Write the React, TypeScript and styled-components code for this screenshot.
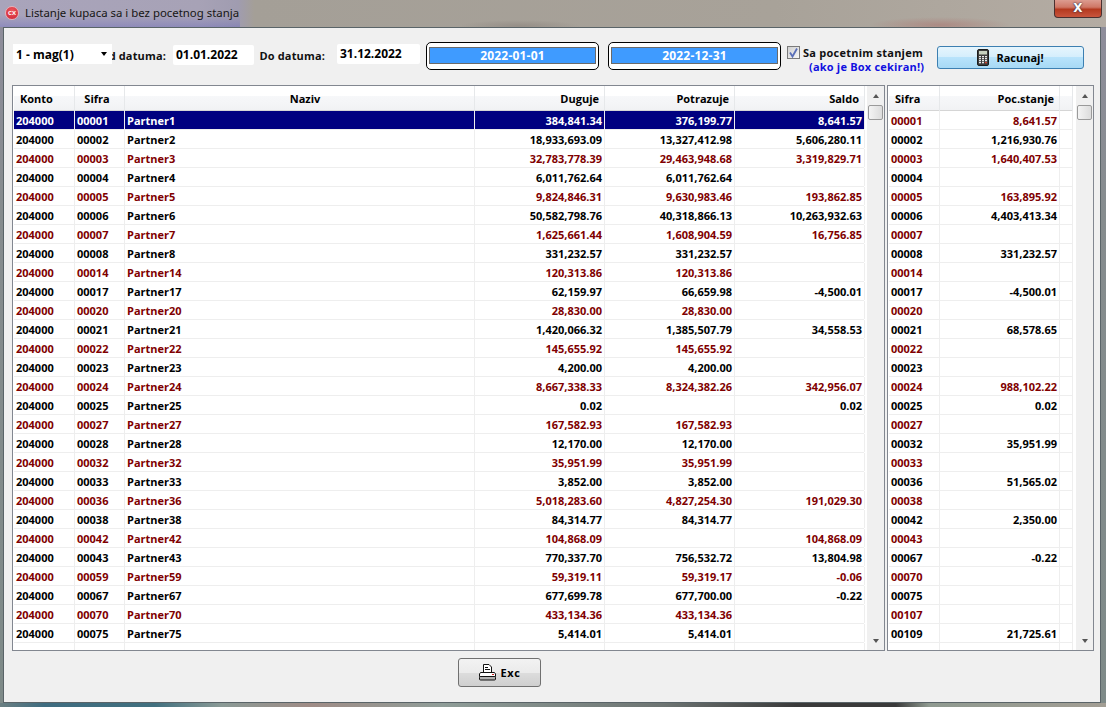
import React from "react";
import styled, { createGlobalStyle } from "styled-components";

const GlobalStyle = createGlobalStyle`
  html, body {
    margin: 0;
    padding: 0;
    width: 1106px;
    height: 707px;
    overflow: hidden;
    background: #8c9a96;
    font-family: "Open Sans", sans-serif;
  }
`;

type LeftRow = [string, string, string, string, string, string];

const leftRows: LeftRow[] = [
  ["204000", "00001", "Partner1", "384,841.34", "376,199.77", "8,641.57"],
  ["204000", "00002", "Partner2", "18,933,693.09", "13,327,412.98", "5,606,280.11"],
  ["204000", "00003", "Partner3", "32,783,778.39", "29,463,948.68", "3,319,829.71"],
  ["204000", "00004", "Partner4", "6,011,762.64", "6,011,762.64", ""],
  ["204000", "00005", "Partner5", "9,824,846.31", "9,630,983.46", "193,862.85"],
  ["204000", "00006", "Partner6", "50,582,798.76", "40,318,866.13", "10,263,932.63"],
  ["204000", "00007", "Partner7", "1,625,661.44", "1,608,904.59", "16,756.85"],
  ["204000", "00008", "Partner8", "331,232.57", "331,232.57", ""],
  ["204000", "00014", "Partner14", "120,313.86", "120,313.86", ""],
  ["204000", "00017", "Partner17", "62,159.97", "66,659.98", "-4,500.01"],
  ["204000", "00020", "Partner20", "28,830.00", "28,830.00", ""],
  ["204000", "00021", "Partner21", "1,420,066.32", "1,385,507.79", "34,558.53"],
  ["204000", "00022", "Partner22", "145,655.92", "145,655.92", ""],
  ["204000", "00023", "Partner23", "4,200.00", "4,200.00", ""],
  ["204000", "00024", "Partner24", "8,667,338.33", "8,324,382.26", "342,956.07"],
  ["204000", "00025", "Partner25", "0.02", "", "0.02"],
  ["204000", "00027", "Partner27", "167,582.93", "167,582.93", ""],
  ["204000", "00028", "Partner28", "12,170.00", "12,170.00", ""],
  ["204000", "00032", "Partner32", "35,951.99", "35,951.99", ""],
  ["204000", "00033", "Partner33", "3,852.00", "3,852.00", ""],
  ["204000", "00036", "Partner36", "5,018,283.60", "4,827,254.30", "191,029.30"],
  ["204000", "00038", "Partner38", "84,314.77", "84,314.77", ""],
  ["204000", "00042", "Partner42", "104,868.09", "", "104,868.09"],
  ["204000", "00043", "Partner43", "770,337.70", "756,532.72", "13,804.98"],
  ["204000", "00059", "Partner59", "59,319.11", "59,319.17", "-0.06"],
  ["204000", "00067", "Partner67", "677,699.78", "677,700.00", "-0.22"],
  ["204000", "00070", "Partner70", "433,134.36", "433,134.36", ""],
  ["204000", "00075", "Partner75", "5,414.01", "5,414.01", ""],
];

const rightRows: [string, string][] = [
  ["00001", "8,641.57"],
  ["00002", "1,216,930.76"],
  ["00003", "1,640,407.53"],
  ["00004", ""],
  ["00005", "163,895.92"],
  ["00006", "4,403,413.34"],
  ["00007", ""],
  ["00008", "331,232.57"],
  ["00014", ""],
  ["00017", "-4,500.01"],
  ["00020", ""],
  ["00021", "68,578.65"],
  ["00022", ""],
  ["00023", ""],
  ["00024", "988,102.22"],
  ["00025", "0.02"],
  ["00027", ""],
  ["00032", "35,951.99"],
  ["00033", ""],
  ["00036", "51,565.02"],
  ["00038", ""],
  ["00042", "2,350.00"],
  ["00043", ""],
  ["00067", "-0.22"],
  ["00070", ""],
  ["00075", ""],
  ["00107", ""],
  ["00109", "21,725.61"],
];

const leftCols = "61px 50px 350px 130px 130px 130px";
const rightCols = "51px 120px 13px";

const App = () => (
  <>
    <GlobalStyle />
    <Desktop>
      <TitleBar>
        <AppIcon>CX</AppIcon>
        <TitleText>Listanje kupaca sa i bez pocetnog stanja</TitleText>
        <CloseButton>X</CloseButton>
      </TitleBar>
      <Client>
        <Toolbar>
          <Combo>
            <span>1 - mag(1)</span>
            <ComboArrow />
          </Combo>
          <DateLabel $width={67} $overlap>
            Od datuma:
          </DateLabel>
          <TextField $width={81} $left={7} $top={1}>
            01.01.2022
          </TextField>
          <DateLabel $width={66} $left={5}>
            Do datuma:
          </DateLabel>
          <TextField $width={83} $left={12}>
            31.12.2022
          </TextField>
          <DateBox $left={6}>
            <DateFill>2022-01-01</DateFill>
          </DateBox>
          <DateBox $left={9}>
            <DateFill>2022-12-31</DateFill>
          </DateBox>
          <CheckArea>
            <CheckLine>
              <CheckBox>
                <svg width="11" height="11" viewBox="0 0 11 11">
                  <path d="M2 5.5 L4.5 9.5 L9 1.5" fill="none" stroke="#5a6fb8" strokeWidth="1.8" />
                </svg>
              </CheckBox>
              <CheckText>Sa pocetnim stanjem</CheckText>
            </CheckLine>
            <CheckHint>(ako je Box cekiran!)</CheckHint>
          </CheckArea>
          <CalcButton>
            <svg width="12" height="17" viewBox="0 0 12 17">
              <rect x="0.5" y="0.5" width="11" height="16" rx="1.5" fill="#3c3c3c" stroke="#1c1c1c" />
              <rect x="2" y="2" width="8" height="3.5" fill="#c8d2c0" />
              {[7, 9, 11, 13].map((y) =>
                [2, 5, 8].map((x) => (
                  <rect key={`${x}-${y}`} x={x} y={y} width="2" height="1.3" fill={y === 13 && x === 8 ? "#d04030" : "#e8e8e8"} />
                ))
              )}
            </svg>
            Racunaj!
          </CalcButton>
        </Toolbar>
        <Grids>
          <Grid $width={873}>
            <GridBody>
              <HeaderRow $cols={leftCols}>
                <HeadCell $align="left" $pad="0 0 0 6px">Konto</HeadCell>
                <HeadCell $align="center">Sifra</HeadCell>
                <HeadCell $align="center" $pad="0 0 0 11px">Naziv</HeadCell>
                <HeadCell $align="right">Duguje</HeadCell>
                <HeadCell $align="right">Potrazuje</HeadCell>
                <HeadCell $align="right">Saldo</HeadCell>
              </HeaderRow>
              {leftRows.map((r, i) => (
                <DataRow key={r[1]} $cols={leftCols} $selected={i === 0} $red={i % 2 === 0}>
                  <Cell>{r[0]}</Cell>
                  <Cell>{r[1]}</Cell>
                  <Cell>{r[2]}</Cell>
                  <NumCell>{r[3]}</NumCell>
                  <NumCell>{r[4]}</NumCell>
                  <NumCell>{r[5]}</NumCell>
                </DataRow>
              ))}
              <DataRow $cols={leftCols} $stub>
                <Cell />
                <Cell />
                <Cell />
                <Cell />
                <Cell />
                <Cell />
              </DataRow>
            </GridBody>
            <ScrollBar />
          </Grid>
          <Grid $width={207}>
            <GridBody>
              <HeaderRow $cols={rightCols}>
                <HeadCell $align="left" $pad="0 0 0 6px">Sifra</HeadCell>
                <HeadCell $align="right">Poc.stanje</HeadCell>
                <HeadCell $align="right" />
              </HeaderRow>
              {rightRows.map((r, i) => (
                <DataRow key={r[0]} $cols={rightCols} $red={i % 2 === 0}>
                  <Cell>{r[0]}</Cell>
                  <NumCell>{r[1]}</NumCell>
                  <Cell />
                </DataRow>
              ))}
              <DataRow $cols={rightCols} $stub>
                <Cell />
                <Cell />
                <Cell />
              </DataRow>
            </GridBody>
            <ScrollBar />
          </Grid>
        </Grids>
        <Footer>
          <ExcButton>
            <svg width="17" height="17" viewBox="0 0 17 17">
              <path d="M4.5 0.5 H10 L12.5 3 V8.5 H4.5 Z" fill="#fff" stroke="#111" />
              <path d="M6 3.5 H9 M6 5.5 H11" stroke="#111" />
              <path d="M1.5 8.5 H15.5 L16.5 10 V12.5 H0.5 V10 Z" fill="#fff" stroke="#111" />
              <rect x="13" y="10" width="2" height="1" fill="#d02020" />
              <rect x="0.5" y="12.5" width="16" height="3.5" rx="1" fill="#b0b0b0" stroke="#111" />
            </svg>
            <ExcLabel>Exc</ExcLabel>
          </ExcButton>
        </Footer>
      </Client>
      <BottomStrip />
    </Desktop>
  </>
);

const ScrollBar = () => (
  <Scroll>
    <ScrollArrow $up />
    <Thumb />
    <ScrollSpace />
    <ScrollArrow />
  </Scroll>
);

export default App;

const Desktop = styled.div`
  width: 1106px;
  height: 707px;
  display: flex;
  flex-direction: column;
  background: linear-gradient(180deg, #8f8d9c 0%, #868c8e 30%, #7e8a88 100%);
  overflow: hidden;
`;

const TitleBar = styled.div`
  height: 27px;
  flex: none;
  display: flex;
  align-items: flex-start;
  padding-left: 5px;
  background:
    radial-gradient(ellipse 70px 8px at 940px 25px, rgba(170, 110, 105, 0.5), transparent),
    radial-gradient(ellipse 60px 6px at 520px 26px, rgba(120, 110, 105, 0.35), transparent),
    linear-gradient(180deg, transparent 55%, rgba(95, 95, 190, 0.35) 100%) 0 0 / 240px 100% no-repeat,
    linear-gradient(90deg, #a9a4bb 0%, #a7a2b6 18%, #a09cb0 21.5%, #a49f97 23%, #a8a299 70%, #b4aca3 100%);
`;

const AppIcon = styled.div`
  width: 14px;
  height: 14px;
  margin-top: 6px;
  border-radius: 50%;
  border: 1px solid #e8b0b8;
  box-sizing: border-box;
  background: radial-gradient(circle at 50% 35%, #ee5a60, #cc2030);
  color: #fff;
  font-size: 6px;
  font-weight: 700;
  line-height: 12px;
  text-align: center;
  flex: none;
`;

const TitleText = styled.div`
  margin: 5px 0 0 6px;
  font-family: "Noto Sans", sans-serif;
  font-size: 11.4px;
  line-height: 16px;
  white-space: nowrap;
  color: #151515;
`;

const CloseButton = styled.div`
  margin-left: auto;
  margin-right: 4px;
  width: 48px;
  height: 18px;
  box-sizing: border-box;
  border: 1px solid #4a3030;
  border-top: none;
  border-radius: 0 0 4px 4px;
  background: linear-gradient(180deg, #dc9c90 0%, #cf7766 42%, #b4391f 55%, #c9553d 100%);
  color: #fff;
  font-family: "DejaVu Sans", sans-serif;
  font-size: 12px;
  font-weight: 700;
  line-height: 16px;
  text-align: center;
  text-shadow: 0 0 1px #303048, 0 0 2px #303048;
`;

const Client = styled.div`
  flex: none;
  width: 1098px;
  height: 676px;
  margin-left: 3px;
  box-sizing: border-box;
  border: 1px solid #5a6468;
  background: #f0f0f0;
  display: flex;
  flex-direction: column;
`;

const BottomStrip = styled.div`
  flex: 1;
  background: linear-gradient(
    90deg,
    #6a7f82 0%,
    #3e6c80 4%,
    #41707f 14%,
    #8a9a96 20%,
    #a08c86 28%,
    #8f9d98 40%,
    #6d7472 60%,
    #3a3a3a 72%,
    #3a3a3a 81%,
    #8f9a90 84%,
    #a39e94 100%
  );
`;

const Toolbar = styled.div`
  height: 57px;
  flex: none;
  display: flex;
  align-items: flex-start;
  padding: 16px 0 0 9px;
  box-sizing: border-box;
  font-size: 11px;
  font-weight: 700;
`;

const Combo = styled.div`
  position: relative;
  z-index: 1;
  width: 99px;
  height: 20px;
  box-sizing: border-box;
  background: #fff;
  padding: 0 5px 0 3px;
  font-size: 12px;
  color: #000;
  display: flex;
  align-items: center;
  justify-content: space-between;
`;

const ComboArrow = styled.div`
  width: 0;
  height: 0;
  border-left: 3.5px solid transparent;
  border-right: 3.5px solid transparent;
  border-top: 4px solid #000;
`;

const DateLabel = styled.div<{ $width: number; $left?: number; $overlap?: boolean }>`
  width: ${(p) => p.$width}px;
  margin-left: ${(p) => (p.$overlap ? -13 : p.$left || 0)}px;
  margin-top: 4px;
  flex: none;
  text-align: right;
  white-space: nowrap;
  letter-spacing: 0.15px;
  line-height: 15px;
  color: #111;
`;

const TextField = styled.div<{ $width: number; $left: number; $top?: number }>`
  width: ${(p) => p.$width}px;
  height: 20px;
  margin-left: ${(p) => p.$left}px;
  margin-top: ${(p) => p.$top || 0}px;
  flex: none;
  box-sizing: border-box;
  background: #fff;
  border-radius: 2px;
  padding-left: 3px;
  font-size: 12px;
  line-height: 20px;
  color: #000;
`;

const DateBox = styled.div<{ $left: number }>`
  width: 173px;
  height: 28px;
  margin-left: ${(p) => p.$left}px;
  margin-top: -2px;
  flex: none;
  box-sizing: border-box;
  background: #fff;
  border: 1px solid #000;
  border-radius: 5px;
  padding: 4px 2px 0;
`;

const DateFill = styled.div`
  height: 17px;
  box-sizing: border-box;
  border: 1px solid #6a6a6a;
  background: #3f9bff;
  color: #fff;
  text-align: center;
  font-size: 12px;
  letter-spacing: 0.2px;
  line-height: 15px;
`;

const CheckArea = styled.div`
  width: 137px;
  margin-left: 6px;
  margin-top: 1px;
  flex: none;
  display: flex;
  flex-direction: column;
  align-items: flex-start;
`;

const CheckLine = styled.div`
  display: flex;
  align-items: center;
  height: 15px;
`;

const CheckBox = styled.div`
  width: 13px;
  height: 13px;
  box-sizing: border-box;
  border: 1px solid #7a7a7a;
  background: linear-gradient(135deg, #d0d0d0, #f8f8f8);
  display: flex;
  align-items: center;
  justify-content: center;
  flex: none;
`;

const CheckText = styled.span`
  margin-left: 3px;
  white-space: nowrap;
  letter-spacing: 0.25px;
  color: #111;
`;

const CheckHint = styled.div`
  margin: -1px 0 0 22px;
  white-space: nowrap;
  letter-spacing: 0.2px;
  color: #1010e0;
`;

const CalcButton = styled.div`
  width: 147px;
  height: 23px;
  margin-left: 13px;
  margin-top: 2px;
  flex: none;
  box-sizing: border-box;
  border: 1px solid #3c7fb1;
  border-radius: 3px;
  background: linear-gradient(180deg, #e6f5fd 0%, #d4eefc 50%, #b8e3fb 50%, #a7d9f5 100%);
  display: flex;
  align-items: center;
  justify-content: center;
  gap: 7px;
  color: #000;
`;

const Grids = styled.div`
  display: flex;
  gap: 2px;
  padding-left: 8px;
  height: 566px;
  flex: none;
`;

const Grid = styled.div<{ $width: number }>`
  width: ${(p) => p.$width}px;
  height: 566px;
  box-sizing: border-box;
  border: 1px solid #828790;
  background: #fff;
  display: flex;
  padding-left: 1px;
  overflow: hidden;
`;

const GridBody = styled.div`
  flex: 1;
  min-width: 0;
  display: flex;
  flex-direction: column;
  font-size: 11px;
  font-weight: 700;
`;

const HeaderRow = styled.div<{ $cols: string }>`
  display: grid;
  grid-template-columns: ${(p) => p.$cols};
  height: 24px;
  flex: none;
  background: linear-gradient(180deg, #fff 0%, #fff 40%, #f7f8fa 40%, #f1f2f4 100%);
  border-bottom: 1px solid #d5d5d5;
`;

const HeadCell = styled.div<{ $align: string; $pad?: string }>`
  border-right: 1px solid #e6e8ea;
  text-align: ${(p) => p.$align};
  padding: ${(p) => p.$pad || "0 5px 0 0"};
  line-height: 25px;
  color: #000;
`;

const DataRow = styled.div<{ $cols: string; $selected?: boolean; $red?: boolean; $stub?: boolean }>`
  display: grid;
  grid-template-columns: ${(p) => p.$cols};
  height: ${(p) => (p.$stub ? "8px" : "19px")};
  flex: none;
  box-sizing: border-box;
  border-bottom: ${(p) => (p.$stub ? "none" : "1px solid #eeeeee")};
  background: ${(p) => (p.$selected ? "#000080" : "#fff")};
  color: ${(p) => (p.$selected ? "#fff" : p.$red ? "#800000" : "#000")};
`;

const Cell = styled.div`
  border-right: 1px solid #eeeeee;
  padding-left: 2px;
  line-height: 20px;
  white-space: nowrap;
  overflow: hidden;
`;

const NumCell = styled(Cell)`
  text-align: right;
  padding: 0 2px 0 0;
`;

const Scroll = styled.div`
  width: 17px;
  flex: none;
  margin-left: 3px;
  background: #f0f0f0;
  display: flex;
  flex-direction: column;
  align-items: center;
`;

const ScrollArrow = styled.div<{ $up?: boolean }>`
  width: 17px;
  height: 19px;
  flex: none;
  display: flex;
  align-items: center;
  justify-content: center;
  &::after {
    content: "";
    border-left: 3.5px solid transparent;
    border-right: 3.5px solid transparent;
    ${(p) => (p.$up ? "border-bottom: 4px solid #555;" : "border-top: 4px solid #555;")}
  }
`;

const Thumb = styled.div`
  width: 15px;
  height: 15px;
  flex: none;
  box-sizing: border-box;
  border: 1px solid #9a9a9a;
  border-radius: 2px;
  background: linear-gradient(90deg, #f4f4f4, #dcdcdc);
`;

const ScrollSpace = styled.div`
  flex: 1;
`;

const Footer = styled.div`
  flex: 1;
  display: flex;
  justify-content: flex-start;
  align-items: flex-start;
  padding: 7px 0 0 454px;
`;

const ExcButton = styled.div`
  width: 83px;
  height: 29px;
  box-sizing: border-box;
  border: 1px solid #707070;
  border-radius: 3px;
  background: linear-gradient(180deg, #f2f2f2 0%, #ebebeb 50%, #dddddd 50%, #cfcfcf 100%);
  display: flex;
  align-items: center;
  justify-content: center;
  gap: 5px;
  font-size: 11px;
  font-weight: 700;
  color: #000;
`;

const ExcLabel = styled.span`
  letter-spacing: 0.6px;
`;
